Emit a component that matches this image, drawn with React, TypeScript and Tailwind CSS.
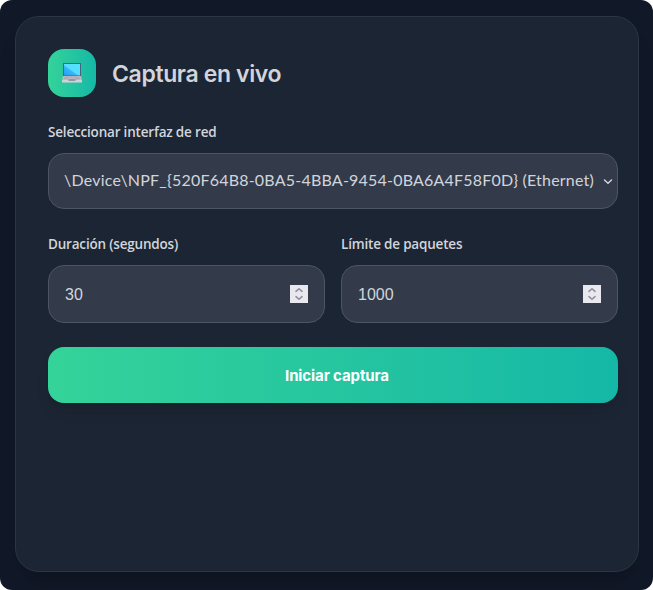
import React from "react";

function Laptop() {
  return (
    <svg width="20" height="20" viewBox="0 0 20 20" aria-hidden="true">
      <defs>
        <linearGradient id="screen" x1="0" y1="1" x2="1" y2="0">
          <stop offset="0" stopColor="#209cf0" />
          <stop offset="0.42" stopColor="#36b9fa" />
          <stop offset="0.47" stopColor="#58dcff" />
          <stop offset="1" stopColor="#50e6ff" />
        </linearGradient>
      </defs>
      <rect x="1" y="0" width="18" height="13" rx="0.5" fill="#44637c" />
      <rect x="2" y="1" width="16" height="11.5" fill="url(#screen)" />
      <path d="M1 13h18l.8 4H.2z" fill="#bdbac5" />
      <path d="M2.5 14.2h15M2.2 15.6h4M13.8 15.6h4" stroke="#9995a5" strokeWidth="0.7" strokeDasharray="1.6 .5" />
      <rect x="6.5" y="16" width="7" height="1.6" fill="#998fa6" />
      <rect x="0" y="17" width="20" height="2.5" rx="0.4" fill="#d5d1da" />
      <rect x="6.5" y="17" width="7" height="1" fill="#9993a5" />
    </svg>
  );
}

function Spinner() {
  return (
    <svg width="18" height="18" viewBox="0 0 18 18" className="bg-[#e9e8ee]" fill="none" stroke="#8f8f9d" strokeWidth="1.5" strokeLinecap="round" strokeLinejoin="round" aria-hidden="true">
      <path d="M6 6.4 9 3.7l3 2.7M6 11.6l3 2.7 3-2.7" />
    </svg>
  );
}

function Label({ children }: { children: string }) {
  return (
    <div className="h-5 whitespace-nowrap font-['Open_Sans',sans-serif] text-[13.5px] font-semibold leading-[21px] tracking-[-0.19px] text-[#d1d5db]">
      <span>{children}</span>
    </div>
  );
}

function NumberField({ label, value }: { label: string; value: string }) {
  return (
    <div>
      <Label>{label}</Label>
      <div className="mt-[11px] flex h-[58px] items-center justify-between rounded-2xl border border-[#4b5563] bg-[#333b4b] px-4 font-['Liberation_Sans',sans-serif] text-base text-[#d1d5db]">
        <span className="pt-0.5">{value}</span>
        <Spinner />
      </div>
    </div>
  );
}

export default function App() {
  return (
    <div className="h-[590px] w-[653px] bg-white">
      <main className="h-full rounded-xl bg-[#111827] pl-[15px] pt-4">
        <section className="h-[556px] w-[624px] rounded-3xl border border-[#2b3543] bg-[#1c2533] px-8 pt-8 shadow-xl">
          <header className="flex items-center gap-4">
            <div className="flex size-12 items-center justify-center rounded-2xl bg-linear-to-r from-[#34d399] to-[#14b8a6]">
              <Laptop />
            </div>
            <h1 className="whitespace-nowrap pt-0.5 font-['Inter',sans-serif] text-[23px] font-semibold leading-8 tracking-[-0.37px] text-[#d1d5db]">Captura en vivo</h1>
          </header>
          <div className="mt-[25px]">
            <Label>Seleccionar interfaz de red</Label>
          </div>
          <div className="mt-[11px] flex h-14 w-[570px] items-center justify-between rounded-2xl border border-[#4b5563] bg-[#333b4b] pl-[15px] pr-1 text-[#d1d5db]">
            <span className="whitespace-nowrap pb-0.5 font-['Lato',sans-serif] text-base tracking-[0.21px]">{"\\Device\\NPF_{520F64B8-0BA5-4BBA-9454-0BA6A4F58F0D} (Ethernet)"}</span>
            <svg width="10" height="10" viewBox="0 0 10 10" fill="none" stroke="#d1d5db" strokeWidth="1.5" strokeLinecap="round" strokeLinejoin="round" aria-hidden="true">
              <path d="m1.5 4 3.5 3.2L8.500 4" />
            </svg>
          </div>
          <div className="mt-[25px] grid w-[570px] grid-cols-2 gap-4">
            <NumberField label="Duración (segundos)" value="30" />
            <NumberField label="Límite de paquetes" value="1000" />
          </div>
          <button className="mt-6 block h-14 w-[570px] rounded-2xl bg-linear-to-r from-[#34d399] to-[#14b8a6] pl-2 pt-0.5 font-['Inter',sans-serif] text-[15px] font-bold tracking-[-0.1px] text-white shadow-lg">
            <span>Iniciar captura</span>
          </button>
        </section>
      </main>
    </div>
  );
}
